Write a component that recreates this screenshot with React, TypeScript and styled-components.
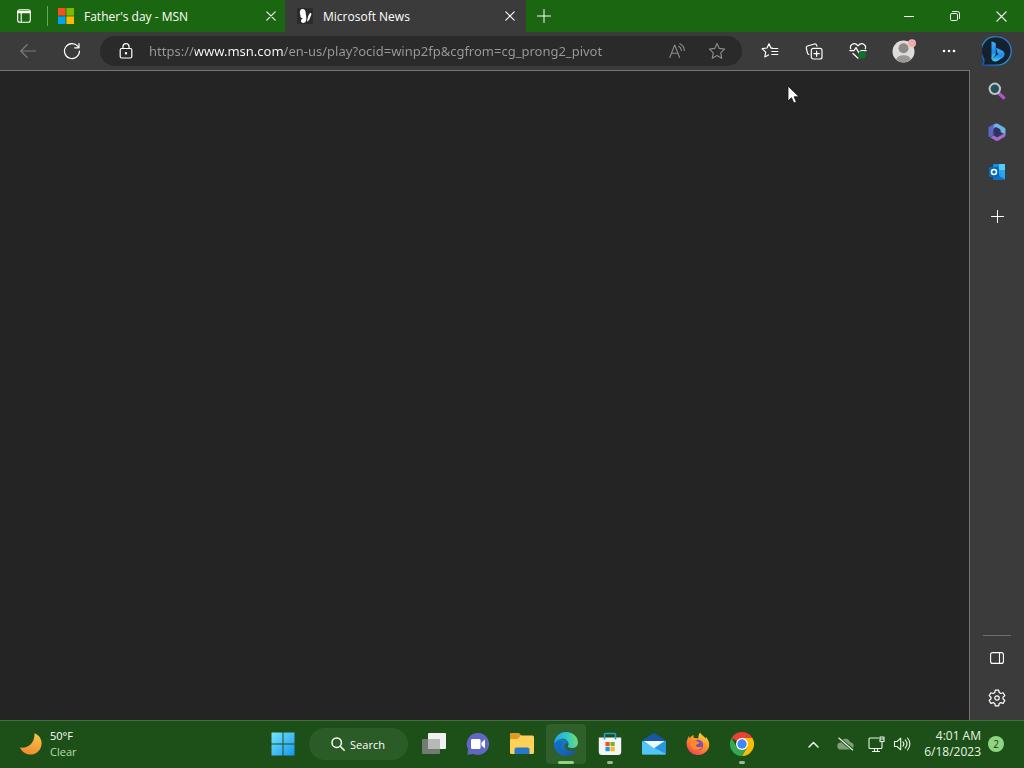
import React from 'react';
import styled, { createGlobalStyle } from 'styled-components';

const GlobalStyle = createGlobalStyle`
  * { box-sizing: border-box; }
  html, body { margin: 0; padding: 0; background: #242424; }
  body, button, input { font-family: "Open Sans", "Noto Sans", sans-serif; font-size: 12px; }
  button { border: 0; padding: 0; background: none; color: inherit; cursor: default; }
  svg { display: block; flex: none; }
`;

const Desktop = styled.div`
  position: relative;
  display: flex;
  flex-direction: column;
  height: 100vh;
  color: #fff;
  overflow: hidden;
`;

const TitleBar = styled.header`
  display: flex;
  flex: none;
  height: 32px;
  background: #1b6610;
`;

const TabActions = styled.button`
  display: flex;
  align-items: center;
  justify-content: center;
  width: 48px;
  background-image: linear-gradient(#66a55e, #66a55e);
  background-size: 1px 20px;
  background-position: right center;
  background-repeat: no-repeat;
`;

const Tab = styled.div<{ $active?: boolean }>`
  display: flex;
  align-items: center;
  width: ${(p) => (p.$active ? 241 : 237)}px;
  padding: 0 ${(p) => (p.$active ? 6 : 4)}px 0 ${(p) => (p.$active ? 12 : 10)}px;
  background: ${(p) => (p.$active ? '#3b3b3b' : 'transparent')};
`;

const TabLabel = styled.button`
  display: flex;
  flex: 1;
  align-items: center;
  gap: 10px;
  height: 32px;
  white-space: nowrap;
`;

const TabClose = styled.button`
  display: flex;
  align-items: center;
  justify-content: center;
  width: 20px;
  height: 20px;
`;

const NewTab = styled(TabClose)`
  width: 36px;
  height: 32px;
`;

const WindowControls = styled.div`
  display: flex;
  margin-left: auto;
`;

const WindowControl = styled.button`
  display: flex;
  align-items: center;
  justify-content: center;
  width: 46px;
`;

const Browser = styled.div`
  display: flex;
  flex: 1;
  min-height: 0;
  background: #3b3b3b;
`;

const Main = styled.main`
  display: flex;
  flex: 1;
  flex-direction: column;
  min-width: 0;
`;

const Toolbar = styled.div`
  display: flex;
  flex: none;
  align-items: center;
  height: 38px;
  padding-left: 6px;
`;

const ToolButton = styled.button<{ $w?: number }>`
  display: flex;
  flex: none;
  align-items: center;
  justify-content: center;
  width: ${(p) => p.$w ?? 44}px;
  height: 30px;
`;

const AddressBar = styled.form`
  display: flex;
  flex: 1;
  align-items: center;
  height: 30px;
  margin: 0 6px;
  padding: 0 5px 0 8px;
  border-radius: 15px;
  background: #2a2a2a;
`;

const AddressInput = styled.input`
  flex: 1;
  min-width: 0;
  height: 24px;
  margin-left: 5px;
  padding: 0;
  border: 0;
  outline: 0;
  font-family: "Noto Sans", "Open Sans", sans-serif;
  font-size: 13px;
  color: #9a9a9a;
  background: linear-gradient(to right, #9a9a9a 46px, #fff 46px, #fff 135px, #9a9a9a 135px);
  background-clip: text;
  -webkit-background-clip: text;
  -webkit-text-fill-color: transparent;
`;

const Page = styled.section`
  flex: 1;
  border: solid #737373;
  border-width: 1px 1px 0 0;
  background: #242424;
`;

const Sidebar = styled.aside`
  display: flex;
  flex: none;
  flex-direction: column;
  align-items: center;
  width: 54px;
  padding: 4px 0 2px;
`;

const SideButton = styled.button<{ $h?: number }>`
  display: flex;
  flex: none;
  align-items: center;
  justify-content: center;
  width: 40px;
  height: ${(p) => p.$h ?? 40}px;
`;

const SideRule = styled.hr`
  width: 28px;
  height: 1px;
  margin: auto 0 2px;
  border: 0;
  background: #6e6e6e;
`;

const Taskbar = styled.footer`
  display: grid;
  grid-template-columns: 1fr auto 1fr;
  flex: none;
  align-items: center;
  height: 48px;
  border-top: 1px solid #41703c;
  background: #1d5018;
`;

const Weather = styled.button`
  display: flex;
  align-items: center;
  justify-self: start;
  gap: 7px;
  padding: 0 0 2px 19px;
  font-size: 11px;
  line-height: 16px;
  text-align: left;
`;

const Lines = styled.span`
  display: flex;
  flex-direction: column;
`;

const Condition = styled.span`
  color: #b9dfb1;
`;

const Apps = styled.nav`
  display: flex;
  align-items: center;
  gap: 4px;
  padding-bottom: 1px;
`;

const AppButton = styled.button<{ $open?: boolean; $running?: boolean }>`
  position: relative;
  display: flex;
  align-items: center;
  justify-content: center;
  width: 40px;
  height: 40px;
  border-radius: 4px;
  background: ${(p) => (p.$open ? '#2f5f2a' : 'transparent')};
  &::after {
    content: '';
    position: absolute;
    bottom: 0;
    left: 50%;
    width: ${(p) => (p.$open ? 16 : p.$running ? 6 : 0)}px;
    height: 3px;
    border-radius: 2px;
    background: ${(p) => (p.$open ? '#8fd480' : '#9bbb96')};
    transform: translateX(-50%);
  }
`;

const SearchPill = styled.button`
  display: flex;
  align-items: center;
  justify-content: center;
  gap: 5px;
  width: 99px;
  height: 32px;
  margin: 0 2px;
  border-radius: 16px;
  background: #2b5c27;
  font-size: 11px;
`;

const Tray = styled.div`
  display: flex;
  align-items: center;
  justify-self: end;
  padding: 0 20px 1px 0;
  color: #e6f6e2;
`;

const TrayButton = styled.button<{ $w: number }>`
  display: flex;
  align-items: center;
  justify-content: center;
  width: ${(p) => p.$w}px;
  height: 40px;
`;

const Clock = styled.button`
  display: flex;
  flex-direction: column;
  width: 68px;
  line-height: 16px;
  text-align: right;
`;

const Badge = styled.span`
  width: 16px;
  height: 16px;
  margin-left: 7px;
  border-radius: 8px;
  background: #8fd480;
  color: #173d13;
  font-size: 10px;
  line-height: 16px;
  text-align: center;
`;

const Pointer = styled.svg`
  position: absolute;
  left: 787px;
  top: 85px;
`;

const line = { fill: 'none', stroke: 'currentColor', strokeLinecap: 'round', strokeLinejoin: 'round' } as const;

const CloseIcon = ({ size }: { size: number }) => (
  <svg width={size} height={size} viewBox="0 0 10 10" {...line} strokeWidth="1.1">
    <path d="M.8.8 9.2 9.2M9.2.8.8 9.2" />
  </svg>
);

const FourSquares = () => (
  <svg width="16" height="16" viewBox="0 0 16 16">
    <path fill="#f25022" d="M0 0h7.6v7.6H0z" />
    <path fill="#7fba00" d="M8.4 0H16v7.6H8.4z" />
    <path fill="#00a4ef" d="M0 8.4h7.6V16H0z" />
    <path fill="#ffb900" d="M8.4 8.4H16V16H8.4z" />
  </svg>
);

const Butterfly = () => (
  <svg width="16" height="16" viewBox="0 0 16 16">
    <path fill="#2b2b2b" d="M0 0h16v16H0z" />
    <path fill="#fff" d="M5 1c1.800-.4 3.300.8 3.600 3l.6 4.500c.4 3.200 0 5.800-2 6.300-1.800.5-3.500-.6-3.200-2.300.1-.9.800-1.500 1.800-2C4 10 3 8.700 3.500 7.200 2.300 4.500 3 1.500 5 1zM13.800 5c.8.3.8 1.500.1 2.800-.6 1.100-.7 2-1.300 3.200-.6 1.300-1.400 2.100-2.600 2.700.3-1.900.5-3.800 1.200-5.500.7-1.800 1.700-3.500 2.600-3.200z" />
  </svg>
);

const star = 'M8 1.300 10 5.700l4.800.6-3.500 3.300.9 4.800L8 12.100l-4.200 2.300.9-4.800L1.200 6.300 6 5.700z';

export default function App() {
  return (
    <Desktop>
      <GlobalStyle />
      <TitleBar>
        <TabActions aria-label="Tab actions">
          <svg width="14" height="14" viewBox="0 0 14 14" {...line} strokeWidth="1.1">
            <rect x=".7" y=".7" width="12.600" height="12.600" rx="2" />
            <path d="M1 2.400h12M1 3.600h12M4.200 4v9" />
          </svg>
        </TabActions>
        <Tab>
          <TabLabel><FourSquares />Father's day - MSN</TabLabel>
          <TabClose aria-label="Close Father's day - MSN"><CloseIcon size={10} /></TabClose>
        </Tab>
        <Tab $active>
          <TabLabel><Butterfly />Microsoft News</TabLabel>
          <TabClose aria-label="Close Microsoft News"><CloseIcon size={10} /></TabClose>
        </Tab>
        <NewTab aria-label="New tab">
          <svg width="14" height="14" viewBox="0 0 14 14" {...line}><path d="M7 .5v13M.5 7h13" /></svg>
        </NewTab>
        <WindowControls>
          <WindowControl aria-label="Minimize">
            <svg width="10" height="10" viewBox="0 0 10 10" {...line}><path d="M.5 5.500h9" /></svg>
          </WindowControl>
          <WindowControl aria-label="Restore">
            <svg width="10" height="10" viewBox="0 0 10 10" {...line}>
              <rect x=".5" y="2.500" width="7" height="7" rx="1.200" />
              <path d="M2.600.5h4.900a2 2 0 0 1 2 2v4.900" />
            </svg>
          </WindowControl>
          <WindowControl aria-label="Close"><CloseIcon size={11} /></WindowControl>
        </WindowControls>
      </TitleBar>

      <Browser>
        <Main>
          <Toolbar>
            <ToolButton aria-label="Back">
              <svg width="16" height="16" viewBox="0 0 16 16" {...line} stroke="#7d7d7d" strokeWidth="1.100">
                <path d="M15.500 8H.8M7.300 1.500.8 8l6.500 6.500" />
              </svg>
            </ToolButton>
            <ToolButton aria-label="Refresh">
              <svg width="18" height="18" viewBox="0 0 18 18" {...line} strokeWidth="1.200">
                <path d="M16.500 9A7.500 7.500 0 1 1 14.700 4.200L16 5.700M16 1.500v4.300h-4.300" />
              </svg>
            </ToolButton>
            <AddressBar onSubmit={(e) => e.preventDefault()}>
              <ToolButton type="button" $w={36} aria-label="Site information">
                <svg width="14" height="16" viewBox="0 0 14 16" {...line} strokeWidth="1.200">
                  <rect x="1.200" y="5.500" width="11.600" height="9.500" rx="1.500" />
                  <path d="M4 5.300V3.600a3 3 0 0 1 6 0v1.700" />
                  <circle cx="7" cy="10.200" r=".6" fill="currentColor" />
                </svg>
              </ToolButton>
              <AddressInput
                aria-label="Address"
                spellCheck={false}
                defaultValue="https://www.msn.com/en-us/play?ocid=winp2fp&cgfrom=cg_prong2_pivot"
              />
              <ToolButton type="button" $w={40} aria-label="Read aloud">
                <svg width="16" height="16" viewBox="0 0 16 16" {...line} stroke="#8c8c8c" strokeWidth="1.100">
                  <path d="M.8 14.500 5.700 2l4.900 12.500M2.500 10.200h6.400M9.600 3.300c1.700.8 2.600 2.200 2.700 4.200M10.800.8c2.800 1.200 4.400 3.500 4.500 6.700" />
                </svg>
              </ToolButton>
              <ToolButton type="button" $w={40} aria-label="Add to favorites">
                <svg width="18" height="18" viewBox="0 0 16 16" {...line} stroke="#8c8c8c"><path d={star} /></svg>
              </ToolButton>
            </AddressBar>
            <ToolButton aria-label="Favorites">
              <svg width="18" height="18" viewBox="0 0 18 18" {...line} strokeWidth="1.200">
                <path d="M11.500 6 9.900 6 8 1.700 6 6l-4.800.7 3.500 3.400-.9 4.900L7.500 13M10.800 6.500h6M10.800 9.500h6M10.800 12.500h6" />
              </svg>
            </ToolButton>
            <ToolButton aria-label="Collections">
              <svg width="18" height="18" viewBox="0 0 18 18" {...line} strokeWidth="1.200">
                <rect x="6.300" y="6.300" width="10.700" height="10.700" rx="2" />
                <path d="M11.650 9v5.300M9 11.650h5.300M4 12.500a2 2 0 0 1-1.500-1.300L1.300 6a1.700 1.700 0 0 1 1.200-2l7-2a1.700 1.700 0 0 1 2.100 1.200l.3 1" />
              </svg>
            </ToolButton>
            <ToolButton aria-label="Browser essentials">
              <svg width="18" height="18" viewBox="0 0 18 18" {...line} strokeWidth="1.200">
                <path d="M1.800 6.800C1 4.800 1.400 3.300 3 2.400c1.900-1.100 4.300-.6 6 1.400 1.700-2 4.100-2.500 6-1.400 1.600.9 2 2.400 1.200 4.400M.8 8.600h4.200l2-3 3 5.500 2-2.500h5.200M4 11.500 9 16.200" />
                <circle cx="13" cy="12.800" r="3.800" fill="#0c7427" stroke="none" />
              </svg>
            </ToolButton>
            <ToolButton $w={48} aria-label="Profile">
              <svg width="24" height="24" viewBox="0 0 24 24">
                <circle cx="11.500" cy="12.500" r="11" fill="#dedcda" />
                <circle cx="11.500" cy="9.300" r="5" fill="#8c8986" />
                <path fill="#9a9794" d="M4 20.600C4.900 17.500 7.500 16.200 11.500 16.200s6.600 1.300 7.500 4.400A11 11 0 0 1 4 20.600z" />
                <circle cx="20" cy="4.300" r="4" fill="#f3b9b6" />
                <circle cx="20" cy="4.300" r="2.200" fill="none" stroke="#e59b98" />
              </svg>
            </ToolButton>
            <ToolButton $w={42} aria-label="Settings and more">
              <svg width="14" height="4" viewBox="0 0 14 4" fill="currentColor">
                <circle cx="2" cy="2" r="1.300" /><circle cx="7" cy="2" r="1.300" /><circle cx="12" cy="2" r="1.300" />
              </svg>
            </ToolButton>
          </Toolbar>
          <Page aria-label="Page content" />
        </Main>

        <Sidebar>
          <SideButton $h={30} aria-label="Bing chat">
            <svg width="30" height="30" viewBox="0 0 30 30">
              <defs>
                <linearGradient id="ring" x1="0" y1="1" x2="1" y2="0">
                  <stop offset="0" stopColor="#1450c8" /><stop offset=".5" stopColor="#2196d8" /><stop offset="1" stopColor="#3868c8" />
                </linearGradient>
                <linearGradient id="bing" x1="0" y1="0" x2="0" y2="1">
                  <stop offset="0" stopColor="#38b4f4" /><stop offset=".6" stopColor="#2088ee" /><stop offset="1" stopColor="#48d8e8" />
                </linearGradient>
              </defs>
              <path d="M15 .8A14.200 14.200 0 1 1 15 29.200H1.200c-.5-.8-.2-1.500.3-2.200.9-1.200.5-2.800 0-4.500A14.200 14.200 0 0 1 15 .8z" fill="#14222f" stroke="url(#ring)" strokeWidth="1.300" />
              <path fill="url(#bing)" d="M9.500 5.200 13 6.700c.5.200.8.600.8 1.200v10.600l-4.300 4.800z" />
              <path fill="url(#bing)" d="m14.200 11.800 6 2.800c2.800 1.500 3.200 5 .7 7l-5 3.100c-2.500 1.400-6 .8-6.400-2.200l7-4.400-1.400-1.400z" />
            </svg>
          </SideButton>
          <SideButton $h={50} aria-label="Search">
            <svg width="18" height="18" viewBox="0 0 18 18">
              <path d="m11 11.500 4.700 4.200" stroke="#b552d4" strokeWidth="3.200" strokeLinecap="round" />
              <circle cx="6.800" cy="6.800" r="5.200" fill="#24515d" stroke="#c2c6c8" strokeWidth="2" />
            </svg>
          </SideButton>
          <SideButton $h={32} aria-label="Microsoft 365">
            <svg width="18" height="20" viewBox="0 0 18 20">
              <path fill="#5968c8" d="M6.200 1.800 1.200 4.700C.7 5 .5 5.400.5 6v7.500c0 1.200 1.200 1.900 2.200 1.300l3-1.700V7.300c0-1 .5-1.700 1.300-2.100l4.300-2.400C9.700 1 7.800.9 6.200 1.800z" />
              <path fill="#6cb5e8" d="m11 2.500 5.600 3.200c.5.400.9.900.9 1.600V14c0-.8-.4-1.400-1-1.800l-4.200-2.400V7.300L8.600 5.200 7 5.200C5.500 6 5.700 7 5.700 9V4.500C5.700 2.200 8.500.8 11 2.500z" />
              <path fill="#a86ad8" d="M1.500 14.800c.6.500 1.400.3 2-.1l2.200-1.300 3.400 2 7.400-4.200c1 .6 1.300 2.900-.2 3.900l-5.500 3.200c-1.200.7-2.600.7-3.800 0z" />
              <path fill="#30306c" d="m9 6.100 3.400 2v3.800L9 13.900l-3.400-2V8.100z" />
            </svg>
          </SideButton>
          <SideButton $h={48} aria-label="Outlook">
            <svg width="18" height="18" viewBox="0 0 18 18">
              <rect x="5" y="1" width="12" height="15.500" rx="1" fill="#1490df" />
              <path fill="#50d0f8" d="M11 1h6v6h-6z" />
              <path fill="#28a8ea" d="M11 7h6v4h-6z" />
              <path fill="#0f70c4" d="M5 9.500 17 16c0 .5-.5.7-1 .7H5z" />
              <path fill="#2ba6ea" d="M17 9.500V16L11 12.800z" />
              <rect x="1" y="4" width="10" height="10" rx="1" fill="#0868bc" />
              <circle cx="6" cy="9" r="2.500" fill="none" stroke="#fff" strokeWidth="1.500" />
            </svg>
          </SideButton>
          <SideButton aria-label="Customize">
            <svg width="13" height="13" viewBox="0 0 13 13" {...line}><path d="M6.500.5v12M.5 6.500h12" /></svg>
          </SideButton>
          <SideRule />
          <SideButton aria-label="Toggle sidebar">
            <svg width="14" height="12" viewBox="0 0 14 12" {...line} strokeWidth="1.100">
              <rect x=".6" y=".6" width="12.800" height="10.800" rx="2" /><path d="M9.500 1v10" />
            </svg>
          </SideButton>
          <SideButton aria-label="Sidebar settings">
            <svg width="18" height="18" viewBox="0 0 18 18" {...line} strokeWidth="1.200">
              <path d="M7.300 1.200h3.400l.5 2.400 1.500.9 2.400-.8 1.700 2.900-1.800 1.700v1.500l1.800 1.700-1.700 2.900-2.400-.8-1.500.9-.5 2.300H7.300l-.5-2.300-1.500-.9-2.400.8-1.700-2.900L3 9.800V8.300L1.200 6.600l1.700-2.900 2.400.8 1.500-.9z" />
              <circle cx="9" cy="9" r="2.200" />
            </svg>
          </SideButton>
        </Sidebar>
      </Browser>

      <Taskbar>
        <Weather>
          <svg width="24" height="24" viewBox="0 0 24 24">
            <defs>
              <linearGradient id="moon" x1=".6" y1="0" x2=".3" y2="1">
                <stop offset="0" stopColor="#f8c443" /><stop offset="1" stopColor="#ef8b32" />
              </linearGradient>
            </defs>
            <path fill="url(#moon)" d="M15.500 1.200c6 2.300 8.600 8.800 6.300 14.200-2.700 6.700-10 9-16 5.600C3.500 19.700 2 17.800 1 15.500c8.400 1.300 15-5.300 14.500-14.300z" />
          </svg>
          <Lines><span>50°F</span><Condition>Clear</Condition></Lines>
        </Weather>

        <Apps>
          <AppButton aria-label="Start">
            <svg width="24" height="24" viewBox="0 0 24 24">
              <defs>
                <linearGradient id="win" x1="0" y1="0" x2="1" y2="1">
                  <stop offset="0" stopColor="#75e4fa" /><stop offset="1" stopColor="#1597f0" />
                </linearGradient>
              </defs>
              <path fill="url(#win)" d="M.5.500h11v11H.5zM12.500.5h11v11h-11zM.5 12.500h11v11H.5zM12.500 12.500h11v11h-11z" />
            </svg>
          </AppButton>
          <SearchPill>
            <svg width="14" height="14" viewBox="0 0 14 14" {...line} strokeWidth="1.500">
              <circle cx="5.700" cy="5.700" r="4.700" /><path d="m9.200 9.200 4 4" />
            </svg>
            Search
          </SearchPill>
          <AppButton aria-label="Task view">
            <svg width="24" height="24" viewBox="0 0 24 24">
              <rect x="6" y="1" width="18" height="16" rx="1" fill="#f1f1f1" />
              <rect x="0" y="7" width="18" height="15" rx="1" fill="#727b71" />
              <path fill="#b7b9b7" d="M6 7h12v10H6z" />
            </svg>
          </AppButton>
          <AppButton aria-label="Chat">
            <svg width="24" height="24" viewBox="0 0 24 24">
              <path fill="#6267c5" d="M12.500 1A11 11 0 1 1 7.500 22L1.500 22.800 2 17A11 11 0 0 1 12.500 1z" />
              <rect x="5" y="7" width="9.500" height="10" rx="1.200" fill="#fff" />
              <path fill="#fff" d="m15.500 10.500 3.500-3v9l-3.500-3z" />
            </svg>
          </AppButton>
          <AppButton aria-label="File Explorer">
            <svg width="24" height="24" viewBox="0 0 24 24">
              <path fill="#dc9c20" d="M1 1h8l3 3v5H0V2a1 1 0 0 1 1-1z" />
              <path fill="#ffd159" d="M0 7h7.500L11 3.500h11.500A1.500 1.500 0 0 1 24 5v15.500a1.500 1.500 0 0 1-1.500 1.500h-21A1.500 1.500 0 0 1 0 20.500z" />
              <path fill="#2479ca" d="M6.500 15.500h11a2 2 0 0 1 2 2V22h-15v-4.500a2 2 0 0 1 2-2z" />
            </svg>
          </AppButton>
          <AppButton $open aria-label="Microsoft Edge">
            <svg width="26" height="26" viewBox="0 0 24 24">
              <defs>
                <linearGradient id="edgeTop" x1="0" y1=".5" x2="1" y2=".4">
                  <stop offset="0" stopColor="#22a5e2" /><stop offset=".55" stopColor="#30c6cb" /><stop offset="1" stopColor="#70df6c" />
                </linearGradient>
                <linearGradient id="edgeLow" x1="0" y1="0" x2="1" y2="1">
                  <stop offset="0" stopColor="#1689d9" /><stop offset="1" stopColor="#15509f" />
                </linearGradient>
              </defs>
              <path fill="url(#edgeLow)" d="M1 12C1.500 8.500 5 7 9 7.500c3 .5 5 2 5.300 4.500-.9-1-2.500-1-3.300.5-1.600 4 3.500 6.500 9.300 5.600.7-.1 1.200 0 .9.600C19.500 21.500 16 23 12.500 23 6 23 .8 18 1 12z" />
              <path fill="#1467b9" d="M9.500 10C6 12.500 6.500 19.500 12 22.900 5.500 23.500 1 18 1 12.500 2.500 8.500 7 8 9.500 10z" opacity=".7" />
              <path fill="url(#edgeTop)" d="M1 11.500C1.400 5.500 6 1 12 1c6.200 0 11 4.300 11 9.500 0 3.300-2.500 5.300-5.500 5.300-2.600 0-4.500-1-3.700-2.100 1-1.300.8-3.500-1.200-5.100C9.200 5.900 3.500 7.300 1 11.500z" />
            </svg>
          </AppButton>
          <AppButton $running aria-label="Microsoft Store">
            <svg width="24" height="24" viewBox="0 0 24 24">
              <path fill="none" stroke="#2a9bd2" strokeWidth="1.600" d="M6.500 7V2.500a1 1 0 0 1 1-1h9a1 1 0 0 1 1 1V7" />
              <path fill="#f4f5f4" d="M.8 5.500h22.400V20a3 3 0 0 1-3 3H3.800a3 3 0 0 1-3-3z" />
              <path fill="none" stroke="#2a9bd2" strokeWidth="1.600" d="M6.500 5V7.500M17.500 5V7.500" />
              <path fill="#f1511b" d="M7.500 10h4.200v4.200H7.500z" />
              <path fill="#6db52d" d="M12.500 10h4.200v4.200h-4.200z" />
              <path fill="#169bdb" d="M7.500 15h4.200v4.200H7.500z" />
              <path fill="#fbb816" d="M12.500 15h4.200v4.200h-4.200z" />
            </svg>
          </AppButton>
          <AppButton aria-label="Mail">
            <svg width="24" height="24" viewBox="0 0 24 24">
              <path fill="#1558a7" d="M0 8.500 11 1.400a2 2 0 0 1 2 0l11 7.100v5H0z" />
              <path fill="#2897e0" d="M0 9h24v12.500a1 1 0 0 1-1 1H1a1 1 0 0 1-1-1z" />
              <path fill="#52c6f5" d="M0 9.200 24 22c0 .3-.5.500-1 .5H1a1 1 0 0 1-1-1z" />
              <path fill="#effaff" d="M1.500 9h21L12 16.300z" />
            </svg>
          </AppButton>
          <AppButton aria-label="Firefox">
            <svg width="26" height="26" viewBox="0 0 26 26">
              <defs>
                <linearGradient id="fox" x1=".8" y1="0" x2=".2" y2="1">
                  <stop offset="0" stopColor="#ffdc3f" /><stop offset=".45" stopColor="#ff942a" /><stop offset="1" stopColor="#f23a5d" />
                </linearGradient>
              </defs>
              <path fill="url(#fox)" d="M15 1.500c1 2.500 4 3.300 5.500 6l.4-1.500c3.200 3.500 4.300 8 2.300 12A11.500 11.500 0 0 1 1.600 13.500C1.500 10 2.300 7.500 4 5l.8 2.400C6 5.400 7 4.700 8.500 4c-.2 1.500.1 2.400.7 3.300 1.500-.5 3-.1 4 .5 0-2.500.6-4.500 1.800-6.300z" />
              <circle cx="13" cy="14" r="5.200" fill="#714cc2" />
              <path fill="#ff8a24" d="M6 9.500c3-1 5.300-.3 6.500 1.100l2 .9c-.5 1.200-1.500 1.700-2.800 1.900-1.300.8-.6 2.600 1.200 2.700 1.700.1 3-.7 4.200 0-1.600 3.300-7.400 4-10.300.9C5.500 15 5 12 6 9.500z" />
              <path fill="#a849ad" d="M13 9.500c3.400 0 5 2.200 4.500 4.900-.8-1.300-2.800-1-4-1 .9-.5 1.500-1 1.700-2z" />
            </svg>
          </AppButton>
          <AppButton $running aria-label="Google Chrome">
            <svg width="24" height="24" viewBox="0 0 24 24">
              <path fill="#ea4335" d="M12 12 1.600 6A12 12 0 0 1 22.400 6z" />
              <path fill="#fbbc05" d="M12 12V6h10.400A12 12 0 0 1 12 24l5.200-9z" />
              <path fill="#34a853" d="M6.800 15 1.600 6A12 12 0 0 0 12 24l5.200-9z" />
              <circle cx="12" cy="12" r="6" fill="#fff" />
              <circle cx="12" cy="12" r="4.700" fill="#4285f4" />
            </svg>
          </AppButton>
        </Apps>

        <Tray>
          <TrayButton $w={32} aria-label="Show hidden icons">
            <svg width="11" height="7" viewBox="0 0 11 7" {...line} strokeWidth="1.500"><path d="m1 6 4.500-4.500L10 6" /></svg>
          </TrayButton>
          <TrayButton $w={32} aria-label="OneDrive">
            <svg width="17" height="14" viewBox="0 0 17 14">
              <path fill="#7f9e79" d="M4 12.500a3.500 3.500 0 0 1-.3-7C4.500 3 6.500 1.500 9 1.800c2 .2 3.400 1.500 3.900 3.300 2.300.2 3.800 1.700 3.800 3.700 0 2.200-1.600 3.700-3.800 3.700z" />
              <path d="m1.500 1 14.500 12" stroke="#1d5018" strokeWidth="3" />
              <path d="m1.500.8 14.500 12.500" stroke="#e6f6e2" strokeWidth="1.200" />
            </svg>
          </TrayButton>
          <TrayButton $w={30} aria-label="Network">
            <svg width="17" height="17" viewBox="0 0 17 17" {...line} strokeWidth="1.100">
              <path d="M10.500 2H2a1 1 0 0 0-1 1v8.500a1 1 0 0 0 1 1h11a1 1 0 0 0 1-1V7.500M4.500 15.500h7M6.500 12.500v3M9.500 12.500v3M12 1h4v4.500h-4zM12 3h4M14 5.500V8" />
            </svg>
          </TrayButton>
          <TrayButton $w={22} aria-label="Volume">
            <svg width="18" height="16" viewBox="0 0 18 16" {...line} strokeWidth="1.100">
              <path d="M1.500 5.500h2.600l3.600-3.300v11.600l-3.600-3.300H1.500zM10 5.800c1.100 1.300 1.100 3.100 0 4.400M12.200 3.900c2.100 2.400 2.100 5.800 0 8.200M14.500 2c3.100 3.500 3.100 8.500 0 12" />
            </svg>
          </TrayButton>
          <Clock><span>4:01 AM</span><span>6/18/2023</span></Clock>
          <Badge>2</Badge>
        </Tray>
      </Taskbar>

      <Pointer width="13" height="20" viewBox="0 0 13 20" aria-hidden="true">
        <path fill="#fff" stroke="#111" strokeWidth=".8" d="M1 1v15l3.500-3.300 2.300 5.400 2.600-1.100-2.300-5.200H12z" />
      </Pointer>
    </Desktop>
  );
}
